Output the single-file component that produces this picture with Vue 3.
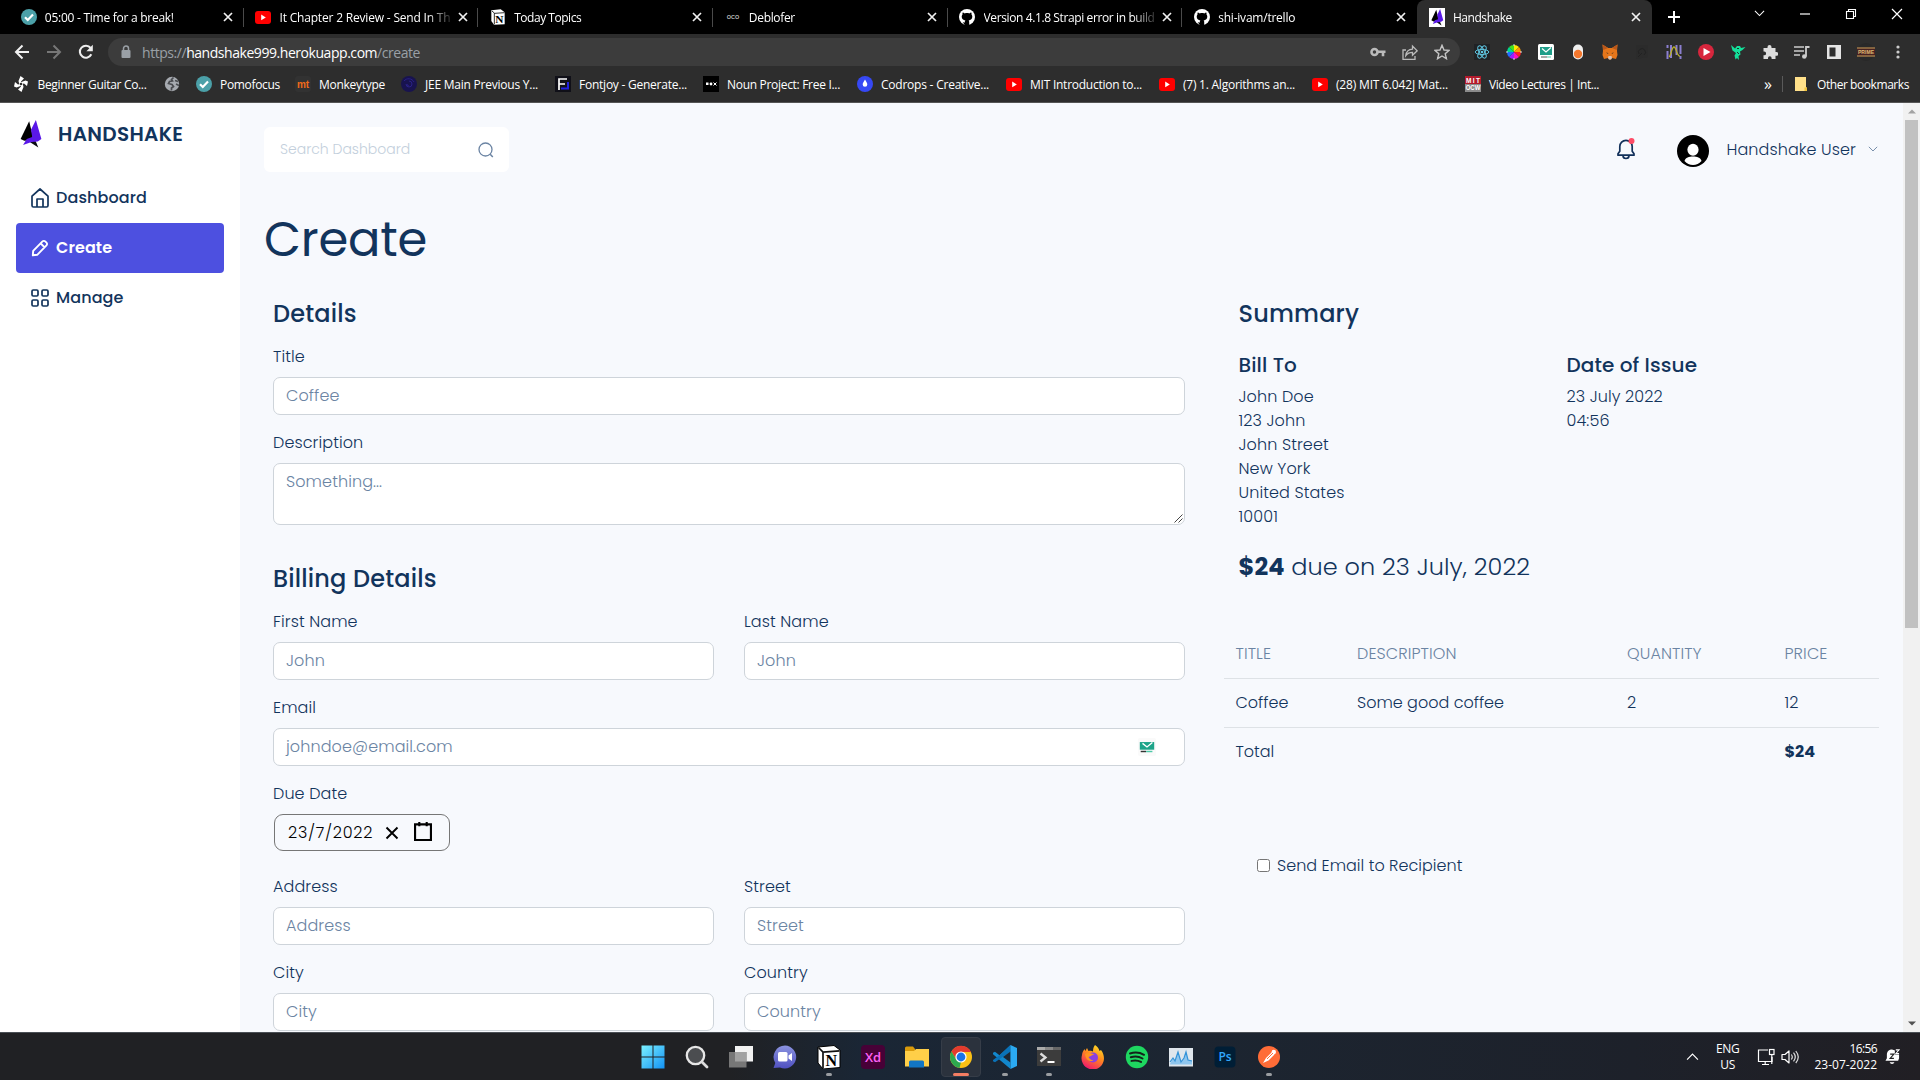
<script setup>
import { h } from 'vue'

const yt = '<rect x="0" y="2" width="16" height="13" rx="3" fill="#f00"/><path d="M6.2 5.6v5.6l4.6-2.8z" fill="#fff"/>'
const gh = '<circle cx="8" cy="8" r="8" fill="#fff"/><path d="M5.8 16v-2.6c-2 .4-2.6-.6-3.2-1.6M10.200 16v-3c0-.7-.2-1.200-.6-1.500 2.200-.3 3.700-1.200 3.700-3.900 0-.9-.3-1.500-.8-2.100.1-.5.1-1.200-.2-1.900-.7 0-1.400.4-2 .8-1.500-.4-3.100-.4-4.600 0-.6-.4-1.300-.8-2-.8-.3.700-.3 1.400-.2 1.900-.5.6-.8 1.200-.8 2.100 0 2.700 1.500 3.600 3.700 3.900-.3.300-.5.700-.6 1.200V16z" fill="#000"/>'
const check = '<circle cx="8" cy="8" r="8" fill="#4ba0a8"/><path d="M4 8.200l2.800 2.800L12 5.600" fill="none" stroke="#fff" stroke-width="2.200"/>'
const shake = '<path d="M7.500 1L.500 15.500l3 1.500 6-.5 1-3.500z" fill="#000"/><path d="M8 18l7 4.500-2.500-6z" fill="#0a0a12"/><path d="M13 0L9 8l1 6-4.500 1.500L2.500 20.500l7-2.500 5-.5 3-2z" fill="#5a18e8"/>'

const icons = {
  yt: [16, 16, yt],
  gh: [16, 16, gh],
  check: [16, 16, check],
  notionTab: [24, 24, '<path d="M2 2l14-1.500 6 4.500v18L6 23.500 2 18z" fill="#fff"/><path d="M3 3l4 3.500L22 5.500M6.500 6v17" stroke="#222" stroke-width="1.400" fill="none"/>' + '<text x="14" y="20.500" text-anchor="middle" font-family="Liberation Serif, serif" font-weight="700" font-size="17" fill="#000">N</text>'],
  oco: [16, 16, '<text x="8" y="10" text-anchor="middle" font-family="Liberation Sans, sans-serif" font-weight="700" font-size="5.500" fill="#bbb">OCO</text>'],
  shake: [18, 23, shake],
  shakeTab: [16, 19, '<rect width="16" height="19" fill="#fff"/><g transform="translate(2 1) scale(.7 .73)">' + shake + '</g>'],
  close: [12, 12, '<path d="M2 2l8 8M10 2l-8 8" stroke="#f1f1f1" stroke-width="1.700"/>'],
  plus: [14, 14, '<path d="M7 1v12M1 7h12" stroke="#fff" stroke-width="2"/>'],
  chev: [12, 8, '<path d="M1 1l5 5 5-5" fill="none" stroke="currentColor" stroke-width="1.100"/>'],
  min: [12, 12, '<path d="M1 6h10" stroke="#fff" stroke-width="1.200"/>'],
  restore: [12, 12, '<path d="M1.500 3.500h7v7h-7zM3.500 3.500v-2h7v7h-2" fill="none" stroke="#fff" stroke-width="1.100"/>'],
  bigx: [12, 12, '<path d="M1 1l10 10M11 1L1 11" stroke="#fff" stroke-width="1.200"/>'],
  back: [16, 16, '<path d="M15 8H2M8.500 1.500L2 8l6.500 6.500" fill="none" stroke="currentColor" stroke-width="2"/>'],
  fwd: [16, 16, '<path d="M1 8h13M7.500 1.500L14 8l-6.500 6.500" fill="none" stroke="currentColor" stroke-width="2"/>'],
  reload: [16, 16, '<path d="M13.300 10.300A6 6 0 1 1 12.600 4" fill="none" stroke="#eee" stroke-width="2.100"/><path d="M14.800.8v6.400H8.400z" fill="#eee"/>'],
  lock: [10, 14, '<rect x="0.500" y="5" width="9" height="8" rx="1" fill="#9aa0a6"/><path d="M2.500 5.500V3.500a2.500 2.500 0 0 1 5 0v2" fill="none" stroke="#9aa0a6" stroke-width="1.500"/>'],
  key: [16, 10, '<circle cx="4.500" cy="5" r="3" fill="none" stroke="#bbb" stroke-width="2.600"/><path d="M8 4.800h7.500M13 5v4.200" stroke="#bbb" stroke-width="2.600"/>'],
  share: [16, 16, '<path d="M4 6H1v9.300h12V12" fill="none" stroke="#bbb" stroke-width="1.300"/><path d="M3.800 11.500c.5-4 3-6.200 6.700-6.400V2l4.700 4.800-4.700 4.500V8.300c-3 0-5 .9-6.700 3.200z" fill="none" stroke="#bbb" stroke-width="1.300"/>'],
  star: [16, 16, '<path d="M8 1.300l2 4.700 5 .4-3.800 3.300 1.200 5L8 12l-4.400 2.700 1.200-5L1 6.400 6 6z" fill="none" stroke="#c4c4c4" stroke-width="1.400"/>'],
  react: [16, 16, '<rect width="16" height="16" fill="#202225"/><g fill="none" stroke="#5fc5e0" stroke-width="1"><ellipse cx="8" cy="8" rx="6.800" ry="2.600"/><ellipse cx="8" cy="8" rx="6.800" ry="2.600" transform="rotate(60 8 8)"/><ellipse cx="8" cy="8" rx="6.800" ry="2.600" transform="rotate(120 8 8)"/></g><circle cx="8" cy="8" r="1.300" fill="#5fc5e0"/>'],
  wheel: [16, 16, '<path d="M8 8V1a7 7 0 0 1 5 2z" fill="#ffe600"/><path d="M8 8l5-5a7 7 0 0 1 2 5z" fill="#ff9a00"/><path d="M8 8h7a7 7 0 0 1-2 5z" fill="#ff2020"/><path d="M8 8l5 5a7 7 0 0 1-5 2z" fill="#ff10c0"/><path d="M8 8v7a7 7 0 0 1-5-2z" fill="#9a20ff"/><path d="M8 8l-5 5a7 7 0 0 1-2-5z" fill="#2070ff"/><path d="M8 8H1a7 7 0 0 1 2-5z" fill="#00d890"/><path d="M8 8L3 3a7 7 0 0 1 5-2z" fill="#40e020"/><path d="M8 0v2M8 14v2M0 8h2M14 8h2" stroke="#ddd"/>'],
  mail: [16, 16, '<rect width="16" height="16" rx="1.500" fill="#fff"/><rect x="2" y="3" width="12" height="8" fill="#1f9e89"/><path d="M4 4.500l4 3.500 5-4.500" stroke="#fff" fill="none" stroke-width="1.200"/><path d="M3 13h6" stroke="#555"/><path d="M9 13h4" stroke="#4cc9a8"/>'],
  egg: [16, 16, '<rect x="3" y="0.500" width="10" height="15" rx="5" fill="#eee"/><circle cx="8" cy="10" r="4.200" fill="#f4772c"/>'],
  fox: [16, 16, '<path d="M.5.500L6.200 4h3.600L15.500.500 15 7l.5 4-1.500 4-4-1-1 1.500H7L6 14l-4 1-1.500-4L1 7z" fill="#e4761b"/><path d="M6 4L.500.500l.8 5.500zM10 4l5.500-3.500-.8 5.500z" fill="#b8571b"/><path d="M6.500 12h3l.5 2-1 1.500H7L6 14z" fill="#d7c1b3"/><path d="M4 8.500l2 .5.300 1zM12 8.500l-2 .5-.3 1z" fill="#222"/>'],
  faint: [16, 16, '<path d="M2 1h12v12l-12 2z" fill="#2b2b2b"/><path d="M5 10a3.500 3.500 0 1 1 5 1M4 13l4-4" stroke="#222" fill="none"/>'],
  lines: [16, 16, '<path d="M1.500 1v3M1.500 7v8M5 1v13M10.500 1v10M14.500 1v9M14.500 12v3" stroke="#8b7fd0" stroke-width="2"/><path d="M3 13c2-1 2.500-10 5-10s2 8 6 9.500" stroke="#b9b02c" fill="none" stroke-width="1.300"/>'],
  play: [16, 16, '<circle cx="8" cy="8" r="8" fill="#d7263d"/><path d="M5.500 4v8l7-4z" fill="#fff"/>'],
  imp: [16, 16, '<path d="M1 1l4 3.500L7 2h3l1 2 4.500-1-3 3-2.500 1.500.5 3L8.500 12l.5 4-2-2-1.500 1.500-1-4L6 9 2.500 6.500z" fill="#14e09a"/><path d="M7 4.500h2M7 8l2 2" stroke="#19352b"/>'],
  puzzle: [16, 16, '<path d="M1.500 4h4V3a2 2 0 0 1 4 0v1h4v4h.8a1.900 1.900 0 0 1 0 3.800h-.8V15H9.600v-1a1.800 1.800 0 0 0-3.600 0v1H1.500v-3.700h.7a1.900 1.900 0 0 0 0-3.800h-.7z" fill="#ddd"/>'],
  list: [16, 16, '<path d="M0 3h10M0 7h10M0 11h6" stroke="#ccc" stroke-width="1.700"/><path d="M12 12.500V3h3.500" stroke="#ccc" stroke-width="1.800" fill="none"/><circle cx="10.300" cy="12.500" r="2.300" fill="#ccc"/>'],
  panel: [16, 16, '<path d="M1 1h14v14H1z" fill="#e4e4e4"/><path d="M3.500 3.500h6v9h-6z" fill="#2d2d2d"/>'],
  prime: [18, 18, '<circle cx="9" cy="9" r="9" fill="#292929"/><rect x="0" y="4.500" width="18" height="9" fill="#472222"/><path d="M0 5h18M0 13h18" stroke="#c9a25a"/><text x="9" y="11" text-anchor="middle" font-family="Liberation Sans, sans-serif" font-weight="700" font-size="5.500" textLength="16" lengthAdjust="spacingAndGlyphs" fill="#e0bd72">PRIME</text>'],
  dots: [4, 14, '<circle cx="2" cy="2" r="1.600" fill="#ccc"/><circle cx="2" cy="7" r="1.600" fill="#ccc"/><circle cx="2" cy="12" r="1.600" fill="#ccc"/>'],
  guitar: [16, 16, '<path d="M7.500 0l3.500 2.500-3 3 1 3.500H6.500L5.500 5z" fill="#fff"/><path d="M8.500 16L5 13.500l3-3L7 7h2.500l1 4z" fill="#fff"/><path d="M1 10.500l1-4.500 3 2.500L9 7.500 7.500 10l-4 1.500z" fill="#fff"/><path d="M15 5.500L14 10l-3-2.500L7 8.500 8.500 6l4-1.500z" fill="#fff"/><circle cx="8" cy="8" r="1.300" fill="#2d2d2d"/>'],
  globe: [16, 16, '<circle cx="8" cy="8" r="7.200" fill="#a6aab0"/><path d="M9.500 1.500l-2 2 1 1.500-3 .5-1 2 3.500 1 1.500 2-2 1.500v2.500M11 4.500l3 1M12 8l3 1.500" fill="none" stroke="#4a4c50" stroke-width="1.700"/>'],
  mt: [16, 16, '<rect width="16" height="16" rx="3" fill="#323232"/><text x="8" y="11.500" text-anchor="middle" font-family="Liberation Sans, sans-serif" font-weight="700" font-size="10" fill="#f06a1a">mt</text>'],
  jee: [16, 16, '<circle cx="8" cy="8" r="8" fill="#18134f"/><path d="M8 5a3 3 0 1 1-3 3M8 10a2 2 0 0 1-2-2M3 5a6 6 0 0 1 10 1" fill="none" stroke="#2a2186"/>'],
  fontjoy: [16, 16, '<rect width="16" height="16" fill="#101018"/><path d="M4 14V3h8M4 8h6" stroke="#fff" stroke-width="1.700" fill="none"/><path d="M6 12.500h7V6" stroke="#2020e0" stroke-width="2" fill="none"/>'],
  noun: [16, 16, '<rect width="16" height="16" fill="#000"/><path d="M3 6.500h2.500v2.500H3z" fill="#fff"/><circle cx="8" cy="8" r="1.400" fill="#fff"/><path d="M10.500 6.500l3 3M13.500 6.500l-3 3" stroke="#fff"/>'],
  codrops: [16, 16, '<circle cx="8" cy="8" r="8" fill="#3648f5"/><path d="M8 3.500c1.500 2.500 2.300 3.500 2.300 5a2.300 2.300 0 0 1-4.600 0c0-1.500.8-2.500 2.300-5z" fill="#fff"/>'],
  mit: [16, 16, '<rect width="16" height="8" fill="#b31b2c"/><rect y="8" width="16" height="8" fill="#8b8b8b"/><text x="8" y="6.600" text-anchor="middle" font-family="Liberation Sans, sans-serif" font-weight="700" font-size="6.500" textLength="14" fill="#fff">MIT</text><text x="8" y="14.300" text-anchor="middle" font-family="Liberation Sans, sans-serif" font-weight="700" font-size="6.500" textLength="14.500" lengthAdjust="spacingAndGlyphs" fill="#fff">OCW</text>'],
  folder: [12, 14, '<path d="M0 0h11v10l1 1v3H0z" fill="#ffe08a"/><path d="M9.500 10.500h2.500V14H9.500z" fill="#f0c23c"/>'],
  home: [18, 20, '<path d="M1 8.200L9 1l8 7.200V17.500A1.500 1.500 0 0 1 15.500 19h-13A1.500 1.500 0 0 1 1 17.500zM6 19v-8h6v8" fill="none" stroke="currentColor" stroke-width="1.700" stroke-linejoin="round"/>'],
  pen: [18, 18, '<path d="M1.800 16.300l.4-4.500L11.500 2.400a1.900 1.900 0 0 1 2.700 0l1.300 1.300a1.900 1.900 0 0 1 0 2.700L6.200 15.800zM9.800 4.500l3.600 3.600" fill="none" stroke="currentColor" stroke-width="1.900" stroke-linejoin="round"/>'],
  grid: [18, 18, '<g fill="none" stroke="currentColor" stroke-width="1.700"><rect x="1" y="1" width="6" height="6" rx="1.200"/><rect x="11" y="1" width="6" height="6" rx="1.200"/><rect x="1" y="11" width="6" height="6" rx="1.200"/><rect x="11" y="11" width="6" height="6" rx="1.200"/></g>'],
  search: [16, 16, '<circle cx="7.500" cy="7.500" r="6.500" fill="none" stroke="#6b84a3" stroke-width="1.300"/><path d="M12.200 12.200l2.600 2.800" stroke="#6b84a3" stroke-width="1.500"/>'],
  bell: [18, 22, '<path d="M1 17.200v-1.500l1.800-2.500V8.500a6.200 6.200 0 0 1 12.400 0v4.700l1.800 2.500v1.500zM6 17.500a3 3 0 0 0 6 0" fill="none" stroke="#12305a" stroke-width="1.700" stroke-linejoin="round"/><circle cx="14.500" cy="3" r="3" fill="#ff4d67"/>'],
  avatar: [32, 32, '<circle cx="16" cy="16" r="16" fill="#000"/><ellipse cx="16" cy="14.800" rx="5.600" ry="6" fill="#fff"/><path d="M7.500 26c1-3.600 4.500-4.600 8.500-4.600s7.500 1 8.500 4.600c-2.300 2.500-5.200 3.900-8.500 3.900S9.800 28.500 7.500 26z" fill="#fff"/>'],
  tempmail: [20, 20, '<rect width="20" height="20" rx="2" fill="#fafafa"/><path d="M2 4.500h16v8.500H2z" fill="#1da489"/><path d="M5 6l5 4 6-5" stroke="#fff" stroke-width="1.500" fill="none"/><path d="M3 15h6" stroke="#333" stroke-width="1.600"/><path d="M9 15h7" stroke="#4cc9a8" stroke-width="1.600"/>'],
  clear: [14, 14, '<path d="M1.500 1.500l11 11M12.500 1.500l-11 11" stroke="#000" stroke-width="1.900"/>'],
  cal: [17, 18, '<path d="M1 2.200h15v14.800H1z" fill="none" stroke="#000" stroke-width="2"/><path d="M5 0v4M12 0v4" stroke="#000" stroke-width="2"/>'],
  grip: [9, 9, '<path d="M.500 8.500l8-8M4.500 8.500l4-4" stroke="#444" stroke-width="1"/>'],
  up: [10, 6, '<path d="M0 5.500h10L5 .500z" fill="currentColor"/>'],
  down: [10, 6, '<path d="M0 .500h10l-5 5z" fill="currentColor"/>'],
  win: [24, 24, '<defs><linearGradient id="w" gradientUnits="userSpaceOnUse" x1="0" y1="0" x2="24" y2="24"><stop stop-color="#7df3ff"/><stop offset="1" stop-color="#1090f5"/></linearGradient></defs><path d="M.500.500h11v11H.500zM12.500.500h11v11h-11zM.500 12.500h11v11H.500zM12.500 12.500h11v11h-11z" fill="url(#w)"/>'],
  find: [24, 24, '<circle cx="10.500" cy="10.500" r="8.700" fill="#4b4d50" stroke="#e6e6e6" stroke-width="2.300"/><path d="M17 17l5 5" stroke="#ddd" stroke-width="2.800" stroke-linecap="round"/>'],
  tasks: [24, 24, '<path d="M6 1h18v15.500H6z" fill="#f2f2f2"/><path d="M0 7h17.500v15.500H0z" fill="#777"/><path d="M6 7h11.500v9.500H6z" fill="#a2a2a2"/>'],
  chat: [24, 24, '<defs><linearGradient id="c" x2="0" y2="1"><stop stop-color="#8b93e0"/><stop offset="1" stop-color="#4f50c0"/></linearGradient></defs><path d="M12 .500A11.500 11.500 0 1 1 7 22.500L.500 23l1.800-5A11.500 11.500 0 0 1 12 .500z" fill="url(#c)"/><rect x="5" y="7" width="9.500" height="9.500" rx="1.500" fill="#fff"/><path d="M15.500 10.500l3.500-2.500v8l-3.500-2.500z" fill="#fff"/>'],
  notion: [24, 24, '<path d="M1 2l16-1.500 6 4.500v17.500L6 24l-5-6z" fill="#fff" stroke="#000"/><path d="M1.500 2.500L6 7l16.500-1.200M6 7v16.500" stroke="#111" stroke-width="1.700" fill="none"/><text x="14.300" y="20.500" text-anchor="middle" font-family="Liberation Serif, serif" font-weight="700" font-size="16" fill="#000">N</text>'],
  xd: [24, 24, '<rect width="24" height="24" rx="4" fill="#470137"/><text x="12" y="16.600" text-anchor="middle" font-family="Open Sans, sans-serif" font-weight="600" font-size="13" fill="#ff61f6">Xd</text>'],
  files: [24, 24, '<path d="M0 3a1.500 1.500 0 0 1 1.500-1.500H8L10 4v4H0z" fill="#d99a0b"/><path d="M0 6h9l2-2h13v17.500H0z" fill="#ffcf48"/><path d="M4 22.500V17a1.500 1.500 0 0 1 1.500-1.500h12A1.500 1.500 0 0 1 19 17v5.500z" fill="#1276c4"/>'],
  chrome: [24, 24, '<circle cx="12" cy="12" r="11" fill="#fbc116"/><path d="M2.500 6.500A11 11 0 0 1 22 7H12l-4.500 8z" fill="#e33b2e"/><path d="M2.500 6.500l5 8.500 4.500 2-1.500 5.900A11 11 0 0 1 2.500 6.500z" fill="#2da94f"/><circle cx="12" cy="12" r="5.600" fill="#fff"/><circle cx="12" cy="12" r="4.400" fill="#1a73e8"/>'],
  code: [24, 24, '<path d="M17.500 0L6.500 10.200 2 6.800 0 7.800v1.400L17.500 24z" fill="#1287cc"/><path d="M17.500 0L6.500 10.200 0 15v1.200l2 1L17.500 6.500z" fill="#0a72b8"/><path d="M17.500 6.500v11L10 12z" fill="#1c2734"/><path d="M17.500 0L24 3v18l-6.500 3z" fill="#2baaf2"/>'],
  term: [24, 24, '<rect y="2" width="24" height="19" fill="#3c3c3c"/><path d="M0 2h8v3H0z" fill="#aaa"/><path d="M8 2h8v3H8z" fill="#888"/><path d="M16 2h8v3h-8z" fill="#666"/><path d="M3.500 8.500l5 4-5 4" fill="none" stroke="#ddd" stroke-width="2.300"/><path d="M10.500 17h7" stroke="#fff" stroke-width="2"/>'],
  firefox: [24, 24, '<defs><linearGradient id="f" x1=".8" x2=".3" y2="1"><stop stop-color="#ffe226"/><stop offset=".45" stop-color="#ff8a1e"/><stop offset="1" stop-color="#f0156f"/></linearGradient></defs><path d="M14 0c3 2 4 4 4.500 6L20 5c3 4 3.500 8 2.500 11.500A11.200 11.200 0 1 1 1 10c.3-3 1.500-4.500 2.500-6l.8 2L6 3l1.500 3c2-.3 3-.3 4.500.5C12 4 12.500 2 14 0z" fill="url(#f)"/><circle cx="12" cy="12.500" r="5" fill="#8a3fe0"/><path d="M4 9c3-2 7-1 9.500.5-2.500 0-3 1.500-6 2.500 1 2 2 3 5 3.500-4 2-8-1-8.500-6.500z" fill="#ff9420"/>'],
  spotify: [24, 24, '<circle cx="12" cy="12" r="11.200" fill="#1ed760"/><path d="M5 8.500c5-1.500 10-1 14 1.300M5.800 12.300c4.200-1.200 8.200-.8 11.700 1.200M6.500 15.900c3.400-.9 6.600-.6 9.500 1" fill="none" stroke="#14231a" stroke-width="2" stroke-linecap="round"/>'],
  perf: [24, 24, '<rect y="3" width="24" height="18.500" fill="#dfe6ec"/><path d="M1 19l3-6 2 3 3-9 3 10 3-4 2-6 2 8 4 1v3.500H1z" fill="#8fc6ee"/><path d="M1 17l3-4 2 3 3-9 3 10 3-4 2-6 2 8 4 1" fill="none" stroke="#3493d8" stroke-width="1.200"/>'],
  ps: [24, 24, '<rect x="1.500" y="1.500" width="21" height="21" rx="4" fill="#001e36"/><text x="12" y="16.300" text-anchor="middle" font-family="Open Sans, sans-serif" font-weight="600" font-size="12" fill="#31a8ff">Ps</text>'],
  postman: [24, 24, '<circle cx="12" cy="12" r="11" fill="#ff6c37"/><path d="M6 18l3-5 6-6 2.500 2.500-6 6z" fill="#fff"/><circle cx="16.800" cy="7" r="2.200" fill="#fff"/><path d="M10 14l6-6" stroke="#ff6c37"/>'],
  net: [18, 18, '<path d="M11 2H1.500v11.500H15V9M5 16.500h7M8.200 14v2.500" fill="none" stroke="#fff" stroke-width="1.200"/><rect x="12.500" y="1.500" width="4.500" height="5" fill="#1e222a" stroke="#fff" stroke-width="1.200"/><path d="M14.800 6.500V16" stroke="#fff" stroke-width="1.200"/>'],
  vol: [18, 16, '<path d="M1 5.500h3L8 2v12l-4-3.500H1z" fill="none" stroke="#fff" stroke-width="1.200" stroke-linejoin="round"/><path d="M10.300 5.500c1.200 1.500 1.200 3.500 0 5M12.500 3.700c2.200 2.700 2.200 6 0 8.700M14.800 2c3.200 4 3.200 8.200 0 12" fill="none" stroke="#ddd" stroke-width="1.200"/>'],
  snooze: [16, 18, '<path d="M.500 13.500L2 11V7c0-3.500 2.500-5.500 5.500-5.500L15 4v7l-1 2.500z" fill="#fff"/><path d="M5 15.300h5c-.8 2.200-4.200 2.200-5 0z" fill="#fff"/><path d="M5.500 6.500h4l-4 4.500h4" fill="none" stroke="#222" stroke-width="1.200"/><path d="M10.500 1h5.500v6h-5.500z" fill="#211f24"/><path d="M11.500 2h3.500l-3.500 4H15" fill="none" stroke="#fff" stroke-width="1.100"/>'],
}

/* Renders one entry of the icon table at the given width. */
const Ico = (props) => {
  const [w, hgt, body] = icons[props.n]
  const width = props.w || w
  return h('svg', { viewBox: `0 0 ${w} ${hgt}`, width, height: (width * hgt) / w, innerHTML: body, class: 'ico' })
}
Ico.props = ['n', 'w']

/* Tracks a label so that it fills a given width in px. */
const vFit = {
  mounted(el, { value }) {
    if (!value) return
    const r = document.createRange()
    r.selectNodeContents(el)
    const natural = r.getBoundingClientRect().width
    el.style.letterSpacing = `${(value - natural) / el.textContent.length}px`
  },
}

const tabs = [
  ['check', '05:00 - Time for a break!', 129],
  ['yt', 'It Chapter 2 Review - Send In Th', 171],
  ['notionTab', 'Today Topics', 67],
  ['oco', 'Deblofer', 46],
  ['gh', 'Version 4.1.8 Strapi error in build', 171],
  ['gh', 'shi-ivam/trello', 77],
  ['shakeTab', 'Handshake', 59],
]
const bookmarks = [
  ['guitar', 'Beginner Guitar Co...', 109, 151],
  ['globe', '', 0, 31.5],
  ['check', 'Pomofocus', 60, 99],
  ['mt', 'Monkeytype', 66, 106],
  ['jee', 'JEE Main Previous Y...', 113, 154],
  ['fontjoy', 'Fontjoy - Generate...', 108, 148],
  ['noun', 'Noun Project: Free I...', 113, 154],
  ['codrops', 'Codrops - Creative...', 108, 149],
  ['yt', 'MIT Introduction to...', 112, 153],
  ['yt', '(7) 1. Algorithms an...', 112, 153],
  ['yt', '(28) MIT 6.042J Mat...', 112, 153],
  ['mit', 'Video Lectures | Int...', 110, 150],
]
const exts = ['react', 'wheel', 'mail', 'egg', 'fox', 'faint', 'lines', 'play', 'imp', 'puzzle', 'list', 'panel', 'prime', 'dots']
const nav = [
  ['home', 'Dashboard'],
  ['pen', 'Create'],
  ['grid', 'Manage'],
]
const address = ['John Doe', '123 John', 'John Street', 'New York', 'United States', '10001']
const issue = ['23 July 2022', '04:56']
const apps = [['win'], ['find'], ['tasks'], ['chat'], ['notion', 1], ['xd'], ['files'], ['chrome', 2], ['code', 1], ['term', 1], ['firefox'], ['spotify'], ['perf'], ['ps'], ['postman', 1]]
</script>

<template>
  <div class="screen">
    <header class="chrome">
      <div class="tabbar">
        <div v-for="(t, i) in tabs" :key="i" class="tab" :class="{ on: i === 6, plain: i >= 5 }">
          <Ico :n="t[0]" w="16" />
          <span class="tab-title"><span v-fit="t[2]">{{ t[1] }}</span></span>
          <Ico n="close" />
        </div>
        <div class="newtab"><Ico n="plus" /></div>
        <div class="winctl">
          <span><Ico n="chev" w="11" /></span><span><Ico n="min" /></span><span><Ico n="restore" /></span><span><Ico n="bigx" /></span>
        </div>
      </div>
      <div class="toolbar">
        <div class="navbtns">
          <span><Ico n="back" /></span><span class="dim"><Ico n="fwd" /></span><span><Ico n="reload" /></span>
        </div>
        <div class="omnibox">
          <Ico n="lock" />
          <span v-fit="278" class="url">https://<b>handshake999.herokuapp.com</b>/create</span>
          <div class="omni-icons">
            <span><Ico n="key" /></span><span><Ico n="share" /></span><span><Ico n="star" /></span>
          </div>
        </div>
        <div class="exts"><span v-for="e in exts" :key="e"><Ico :n="e" /></span></div>
      </div>
      <div class="bookmarks">
        <div v-for="(b, i) in bookmarks" :key="i" class="bm" :style="{ width: b[3] + 'px' }">
          <Ico :n="b[0]" w="16" /><span v-if="b[1]" v-fit="b[2]">{{ b[1] }}</span>
        </div>
        <div class="bm-end">
          <span class="more">»</span><i></i><Ico n="folder" /><span v-fit="92">Other bookmarks</span>
        </div>
      </div>
    </header>

    <div class="page">
      <aside>
        <div class="brand"><Ico n="shake" w="22" /><span>HANDSHAKE</span></div>
        <nav>
          <a v-for="(n, i) in nav" :key="i" :class="{ active: i === 1 }"><Ico :n="n[0]" w="18" /><span>{{ n[1] }}</span></a>
        </nav>
      </aside>

      <main>
        <div class="topbar">
          <div class="searchbox"><span>Search Dashboard</span><Ico n="search" /></div>
          <div class="user">
            <Ico n="bell" w="18" /><Ico n="avatar" /><span class="uname">Handshake User</span><Ico n="chev" w="10" class="caret" />
          </div>
        </div>
        <h1><span v-fit="163.5">Create</span></h1>

        <div class="cols">
          <section class="form">
            <h2>Details</h2>
            <label>Title</label>
            <div class="input">Coffee</div>
            <label>Description</label>
            <div class="input area">Something...<Ico n="grip" class="grip" /></div>

            <h2 class="billing">Billing Details</h2>
            <div class="row">
              <div><label>First Name</label><div class="input">John</div></div>
              <div><label>Last Name</label><div class="input">John</div></div>
            </div>
            <label>Email</label>
            <div class="input mailbox"><span>johndoe@email.com</span><Ico n="tempmail" w="18" /></div>
            <label>Due Date</label>
            <div class="date"><span v-fit="86">23/7/2022</span><Ico n="clear" /><Ico n="cal" w="18" /></div>
            <div class="row">
              <div><label>Address</label><div class="input">Address</div></div>
              <div><label>Street</label><div class="input">Street</div></div>
            </div>
            <div class="row">
              <div><label>City</label><div class="input">City</div></div>
              <div><label>Country</label><div class="input">Country</div></div>
            </div>
          </section>

          <section class="summary">
            <h2>Summary</h2>
            <div class="facts">
              <div>
                <h3>Bill To</h3>
                <p v-for="a in address" :key="a">{{ a }}</p>
              </div>
              <div>
                <h3>Date of Issue</h3>
                <p v-for="a in issue" :key="a">{{ a }}</p>
              </div>
            </div>
            <div class="due"><b>$24</b> due on 23 July, 2022</div>
            <div class="table">
              <div class="tr head">
                <span>TITLE</span><span>DESCRIPTION</span><span>QUANTITY</span><span>PRICE</span>
              </div>
              <div class="tr">
                <span>Coffee</span><span>Some good coffee</span><span>2</span><span>12</span>
              </div>
              <div class="tr">
                <span>Total</span><span></span><span></span><b>$24</b>
              </div>
            </div>
            <div class="send"><i></i><span>Send Email to Recipient</span></div>
          </section>
        </div>
      </main>

      <div class="scroll"><Ico n="up" w="8" class="su" /><div class="thumb"></div><Ico n="down" w="8" class="sd" /></div>
    </div>

    <footer>
      <div class="apps">
        <div v-for="a in apps" :key="a[0]" class="app" :class="{ run: a[1] === 1, cur: a[1] === 2 }"><Ico :n="a[0]" /></div>
      </div>
      <div class="tray">
        <Ico n="chev" w="13" class="tup" />
        <div class="lang"><span v-fit="23.500">ENG</span><span v-fit="15">US</span></div>
        <Ico n="net" /><Ico n="vol" />
        <div class="clock"><span v-fit="27.500">16:56</span><span v-fit="62.500">23-07-2022</span></div>
        <Ico n="snooze" w="15" />
      </div>
    </footer>
  </div>
</template>

<style>
body { margin: 0; overflow: hidden; }
</style>

<style scoped>
* { box-sizing: border-box; }
.screen { width: 1920px; height: 1080px; display: flex; flex-direction: column; overflow: hidden; font-family: "Open Sans", "Noto Sans", sans-serif; font-size: 12px; color: #fff; white-space: nowrap; }
.ico { display: block; flex: none; }
.chrome { height: 103px; background: #2d2d2d; border-bottom: 1px solid #555; flex: none; }
.tabbar { height: 34px; background: #000; display: flex; padding-left: 9px; }
.tab { width: 234.700px; height: 34px; display: flex; align-items: center; padding: 0 9px 0 11.500px; position: relative; flex: none; }
.tab::after { content: ""; position: absolute; right: 0; top: 8px; width: 1px; height: 19px; background: #4a4a4a; }
.tab.plain::after { display: none; }
.tab.on { background: #2d2d2d; border-radius: 8px 8px 0 0; }
.tab-title { margin-left: 8.300px; width: 173px; margin-right: 4.200px; overflow: hidden; flex: none; -webkit-mask-image: linear-gradient(to right, #000 148px, transparent 176px); mask-image: linear-gradient(to right, #000 148px, transparent 176px); }
.newtab { width: 44px; display: flex; align-items: center; justify-content: center; }
.winctl { margin-left: auto; display: flex; height: 28px; }
.winctl span { width: 46px; display: flex; align-items: center; justify-content: center; }
.toolbar { display: flex; height: 34px; padding-top: 4px; }
.navbtns { width: 108px; display: flex; padding-left: 6px; height: 28px; flex: none; }
.navbtns span { width: 32px; display: flex; align-items: center; justify-content: center; color: #f0f0f0; }
.navbtns .dim { color: #777; }
.omnibox { width: 1352px; height: 28px; border-radius: 14px; background: #3c3c3c; display: flex; align-items: center; padding-left: 13px; flex: none; }
.url { font-size: 14px; color: #9aa0a6; margin-left: 11px; }
.url b { font-weight: 400; color: #fff; }
.omni-icons { margin-left: auto; display: flex; padding-right: 2px; }
.omni-icons span, .exts span { width: 32px; display: flex; align-items: center; justify-content: center; flex: none; }
.exts { display: flex; align-items: center; height: 28px; padding-left: 6px; }
.bookmarks { height: 32px; display: flex; align-items: center; padding-left: 13px; }
.bm { display: flex; align-items: center; gap: 8.500px; flex: none; }
.bm-end { margin-left: auto; display: flex; align-items: center; padding-right: 11px; }
.bm-end .more { font-size: 16px; margin-right: 10px; line-height: 20px; }
.bm-end i { width: 1px; height: 16px; background: #5a5a5a; margin-right: 12px; }
.bm-end .ico { margin-right: 10px; }

.page { height: 929px; flex: none; display: flex; background: #f7f9fd; font-family: Poppins, Inter, "Open Sans", sans-serif; font-size: 16px; font-weight: 300; letter-spacing: .1px; color: #12345c; overflow: hidden; }
aside { width: 240px; background: #fff; flex: none; }
.brand { display: flex; align-items: center; height: 62px; padding-left: 20px; font-size: 20px; font-weight: 600; letter-spacing: .3px; }
.brand span { margin-left: 16px; }
nav { padding: 8px 16px 0; }
nav a { display: flex; align-items: center; height: 50px; padding-left: 15px; border-radius: 4px; font-weight: 500; }
nav a span { margin-left: 7px; padding-bottom: 2px; }
nav a.active { background: #4d50e0; color: #fff; font-weight: 600; }
main { width: 1663px; padding: 0 0 0 24px; flex: none; }
.topbar { display: flex; height: 92px; align-items: center; }
.searchbox { width: 245px; height: 45px; border-radius: 6px; background: #fff; display: flex; align-items: center; justify-content: space-between; padding: 1px 15px 0 16px; font-size: 14px; letter-spacing: 0; color: #c3cfdc; }
.user { margin-left: auto; display: flex; align-items: center; padding-right: 25px; }
.user .ico:nth-child(2) { margin: 3px 17px 0 42px; }
.uname { margin-right: 12px; }
.caret { color: #6b84a3; }
h1 { margin: 15px 0 0 0; font-size: 48px; line-height: 60px; height: 58px; font-weight: 400; }
h2 { margin: 0 0 16px; font-size: 24px; line-height: 29px; font-weight: 500; letter-spacing: .18px; }
.cols { display: flex; margin-top: 31px; }
.form { width: 912px; margin-left: 9px; flex: none; }
label { display: block; height: 24px; line-height: 25px; margin-bottom: 9px; }
.input { height: 38px; border: 1px solid #ced4da; border-radius: 7px; background: #fff; margin-bottom: 15px; padding: 0 12px; line-height: 35px; color: #6b84a3; position: relative; }
.area { height: 62px; }
.grip { position: absolute; right: 1px; bottom: 1px; }
.billing { margin-top: 39px; }
.row { display: flex; gap: 30px; }
.row > div { flex: 1; }
.mailbox { display: flex; justify-content: space-between; align-items: center; padding-right: 28px; }
.mailbox span { padding-bottom: 1px; }
.date { width: 176px; height: 37px; margin: 0 0 23px 1px; border: 1px solid #767676; border-radius: 9px; display: flex; align-items: center; padding-left: 13px; color: #000; }
.date .ico:nth-child(2) { margin: 0 15px 0 12px; }
.date .ico:nth-child(3) { margin-top: -1px; }
.summary { width: 655px; margin-left: 39px; flex: none; }
.summary h2 { margin: 0 0 23px 14.500px; }
.facts { display: flex; margin-left: 14.500px; }
.facts > div { width: 328px; flex: none; }
.facts > div:last-child { width: 300px; }
h3 { margin: 0 0 4px; font-size: 20px; line-height: 29px; font-weight: 500; }
p { margin: 0; height: 24px; line-height: 25px; }
.due { margin: 21px 0 0 14.500px; height: 36px; line-height: 36px; font-size: 24px; }
.due b, .tr b { font-weight: 700; }
.table { margin-top: 45px; letter-spacing: 0; }
.tr { height: 49px; display: grid; grid-template-columns: 121.500px 270px 157.500px 1fr; align-items: center; padding: 0 0 2px 11.500px; border-bottom: 1px solid #dee2e6; width: 655px; }
.tr:last-child { border: 0; }
.tr.head { color: #6b84a3; letter-spacing: .1px; }
.tr > span, .tr > b { justify-self: start; }
.send { display: flex; align-items: center; height: 24px; margin: 76px 0 0 33px; letter-spacing: .03px; }
.send i { width: 13px; height: 13px; border: 1px solid #767676; border-radius: 2.500px; background: #fff; margin-right: 7px; }
.scroll { width: 17px; background: #f1f1f1; display: flex; flex-direction: column; align-items: center; }
.su { color: #a3a3a3; margin: 6px 0 6px; }
.thumb { width: 13px; height: 508px; background: #c1c1c1; }
.sd { color: #505050; margin-top: auto; margin-bottom: 6px; }

footer { height: 48px; border-top: 1px solid #4a4f55; background: linear-gradient(90deg, #202124 0, #202124 38%, #1a2635 45%, #1c2531 62%, #1d212a 85%, #211f24 100%); display: flex; justify-content: space-between; flex: none; }
.apps { display: flex; padding-left: 631px; align-items: center; }
.app { width: 40px; height: 40px; margin: 0 2px; display: flex; align-items: center; justify-content: center; border-radius: 4px; position: relative; }
.cur { background: #2b323d; border: 1px solid #363d48; }
.run::after, .cur::after { content: ""; position: absolute; bottom: 1px; left: 17px; width: 6px; height: 3px; border-radius: 2px; background: #9a9da1; }
.cur::after { width: 16px; left: 11px; bottom: 0; background: #f47e63; }
.tray { display: flex; align-items: center; padding-right: 20px; font-size: 12px; line-height: 16px; }
.tup { transform: rotate(180deg); margin-right: 1px; }
.lang { display: flex; flex-direction: column; align-items: center; margin: 0 17px 0 16px; }
.tray > .ico:nth-child(4) { margin: 0 16px 0 6px; }
.clock { display: flex; flex-direction: column; align-items: flex-end; margin-right: 8px; }
</style>
